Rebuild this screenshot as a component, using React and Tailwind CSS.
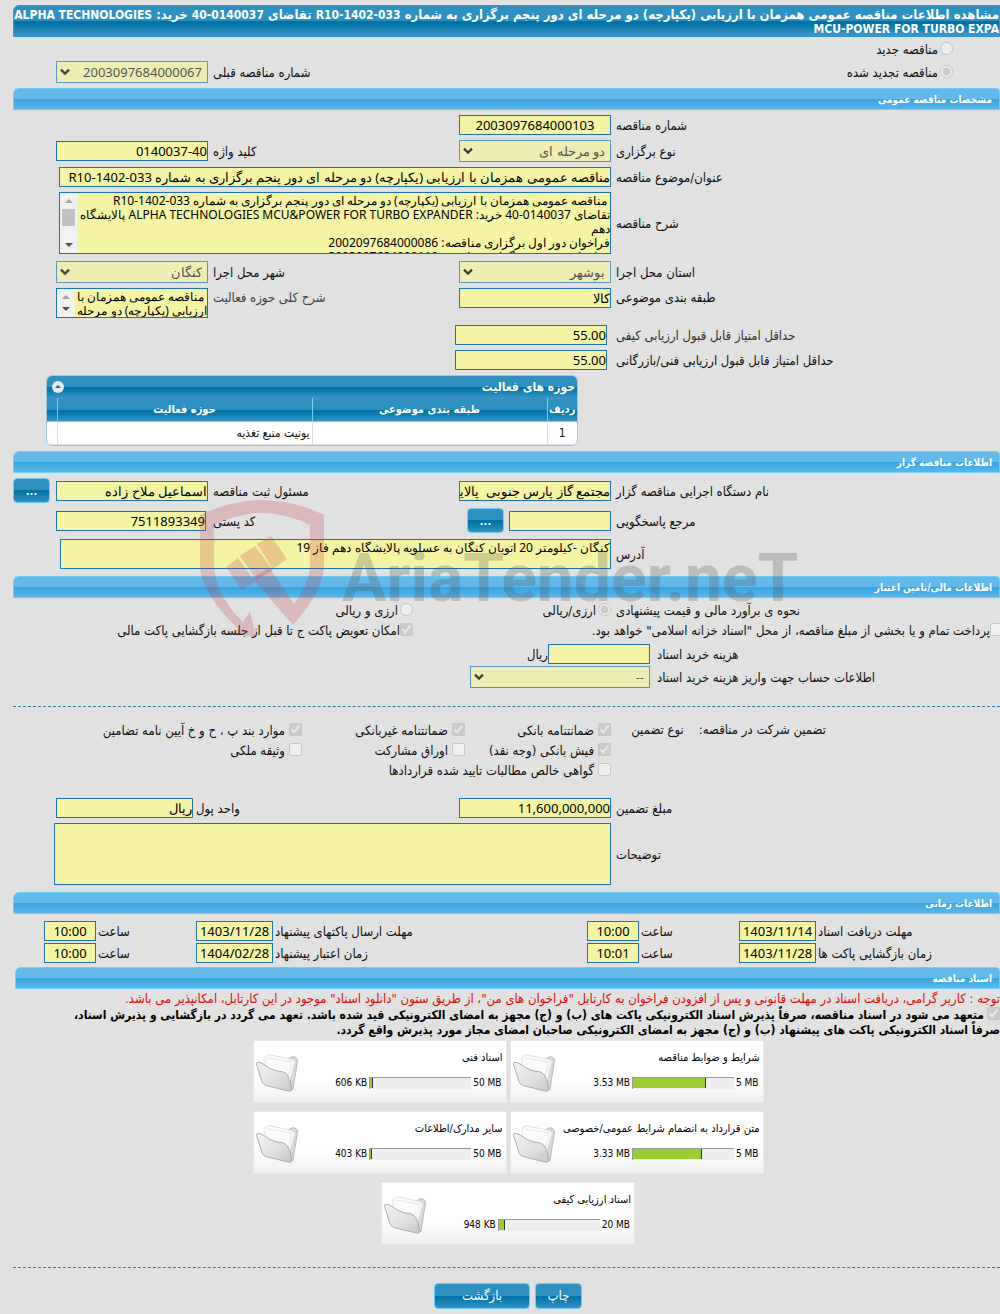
import React, { useId } from "react";

const INPUT =
  "block h-5 border border-[#1d74ab] bg-[#f5f4a4] font-['Noto_Sans',sans-serif] text-[13px] leading-[18px] text-black outline-none";
const AREA =
  "block min-w-0 flex-1 resize-none overflow-hidden whitespace-pre bg-[#f5f4a4] font-['Noto_Sans',sans-serif] text-black outline-none";
const DARK =
  "bg-[linear-gradient(#2d90bf_0,#2d90bf_48%,#0074a8_50%,#0074a8_56%,#3593c1_100%)]";

function Section({ children, edge = "me-[13px]" }) {
  return (
    <h2
      className={`${edge} flex h-[22px] items-center rounded-tl-md rounded-tr-sm border border-[#6dcdf5] bg-[linear-gradient(#63baea_0,#63baea_48%,#36a6e0_50%,#36a6e0_56%,#5db6ea_100%)] ps-[7px] text-[10px] font-bold text-white`}
    >
      {children}
    </h2>
  );
}

function Row({ children, className = "mt-[5px]", align = "items-center" }) {
  return <div className={`grid grid-cols-[384fr_403fr_213fr] ${align} ${className}`}>{children}</div>;
}

function Label({ htmlFor, children, className = "" }) {
  return (
    <label htmlFor={htmlFor} className={`pt-[2px] text-end leading-4 whitespace-nowrap ${className}`}>
      {children}
    </label>
  );
}

function Select({ id, value, width }) {
  return (
    <div className={`relative ${width}`}>
      <select
        id={id}
        disabled
        className="block h-[22px] w-full appearance-none border border-[#5b97bd] bg-[#eeedb3] ps-[5px] pe-6 font-['Noto_Sans',sans-serif] text-[13px] leading-5 text-[#545454] opacity-100"
      >
        <option>{value}</option>
      </select>
      <svg className="pointer-events-none absolute top-[7px] left-1 h-2 w-[10px]" viewBox="0 0 10 8">
        <path d="M1 1.6 5 5.6 9 1.6" fill="none" stroke="#3f3f3f" strokeWidth="2.2" />
      </svg>
    </div>
  );
}

function ScrollBar({ thumb }) {
  return (
    <div className="flex w-[17px] shrink-0 flex-col items-center justify-between bg-[#f1f1f1] py-[6px]">
      <svg className="h-1 w-2" viewBox="0 0 8 4"><path d="M0 4 4 0 8 4Z" fill="#a3a3a3" /></svg>
      {thumb && <div className="mb-3 h-[17px] w-[13px] bg-[#c1c1c1]" />}
      <svg className="h-1 w-2" viewBox="0 0 8 4"><path d="M0 0 4 4 8 0Z" fill="#505050" /></svg>
    </div>
  );
}

function Choice({ type = "checkbox", name, checked, children, gap = "gap-1", className = "" }) {
  const id = useId();
  return (
    <div className={`flex items-center whitespace-nowrap ${gap} ${className}`}>
      <input id={id} type={type} name={name} disabled defaultChecked={checked} className="-mt-[2px] h-[13px] w-[13px] shrink-0" />
      <label htmlFor={id} className="pt-[2px] leading-[18px]">{children}</label>
    </div>
  );
}

function More({ label }) {
  return (
    <button
      type="button"
      aria-label={label}
      className={`block h-[25px] w-[37px] rounded border border-[#6dcdf5] pt-[2px] text-[11px] leading-5 font-bold text-white ${DARK}`}
    >
      ...
    </button>
  );
}

function Dashes({ className }) {
  return <hr className={`me-[13px] border-0 border-t border-dashed border-[#2579a8] ${className}`} />;
}

function Folder() {
  return (
    <svg className="h-10 w-[42px]" viewBox="0 0 42 40">
      <defs>
        <linearGradient id="folderFront" x1="0" y1="0" x2="1" y2="1">
          <stop offset="0" stopColor="#f2f2f2" />
          <stop offset="0.6" stopColor="#dfdfdf" />
          <stop offset="1" stopColor="#c6c6c6" />
        </linearGradient>
      </defs>
      <path d="M30 7 36 4Q41 3 41.500 8L37 36Q36 38 33 37L26 33Z" fill="#d8d8d8" stroke="#b8b8b8" />
      <path d="M9 4 13 1.500 36 6.500 39 9 33 30 9 20Z" fill="#fbfbfb" stroke="#e2e2e2" />
      <path d="M12 5 36 9 31 28" fill="none" stroke="#e8e8e8" />
      <path
        d="M1 9.500Q0 10.500 .8 12L6 29Q7 31.500 10 32.500L32 38Q36 39 35.500 35.500Q34.500 25 30 20.500Q27 18 21 18Q13 16 8 11.500Q6 10 3.500 9.500Z"
        fill="url(#folderFront)"
        stroke="#adadad"
      />
    </svg>
  );
}

function DocCard({ title, used, limit, percent, className = "" }) {
  return (
    <article
      className={`flex h-[63px] w-[254px] justify-between border border-[#e9e9e9] bg-[linear-gradient(#fff_60%,#f0f0f0_100%)] text-black ${className}`}
    >
      <div className="flex flex-col gap-[11px] ps-[3px] pt-[10px]">
        <h3 className="text-[11px] leading-[14px] whitespace-nowrap">{title}</h3>
        <div className="flex items-center gap-[2px] ps-px text-[10px] leading-[14px] whitespace-nowrap">
          <span dir="ltr">{limit}</span>
          <div dir="ltr" className="h-3 w-[102px] border-t border-l border-[#999] bg-[#eee]">
            <div className="h-[10px] border-r border-[#333] bg-[#9acd32]" style={{ width: `${percent}%` }} />
          </div>
          <span dir="ltr">{used}</span>
        </div>
      </div>
      <div className="pe-[2px] pt-[12px]"><Folder /></div>
    </article>
  );
}

function TimeRow({ items, className }) {
  const id = useId();
  return (
    <div className={`grid grid-cols-[182fr_177fr_366fr_177fr_98fr] items-center ${className}`}>
      <Label htmlFor={id + "d0"}>{items[0].label}</Label>
      <div className="flex items-center justify-between ps-[2px]">
        <input id={id + "d0"} readOnly defaultValue={items[0].date} className={`${INPUT} w-[77px] text-center`} />
        <Label htmlFor={id + "t0"}>ساعت</Label>
      </div>
      <div className="flex items-center justify-between ps-[2px]">
        <input id={id + "t0"} readOnly defaultValue={items[0].time} className={`${INPUT} w-[52px] text-center`} />
        <Label htmlFor={id + "d1"}>{items[1].label}</Label>
      </div>
      <div className="flex items-center justify-between ps-[2px]">
        <input id={id + "d1"} readOnly defaultValue={items[1].date} className={`${INPUT} w-[77px] text-center`} />
        <Label htmlFor={id + "t1"}>ساعت</Label>
      </div>
      <div className="ps-[2px]">
        <input id={id + "t1"} readOnly defaultValue={items[1].time} className={`${INPUT} w-[52px] text-center`} />
      </div>
    </div>
  );
}

function Watermark() {
  return (
    <div aria-hidden="true" dir="ltr" className="pointer-events-none absolute top-[497px] left-1/5 flex">
      <svg className="h-[144px] w-[126px]" viewBox="200 497 126 144" fill="#bf3a44" fillOpacity="0.24">
        <path d="M200 515Q262 485 324 515V565Q324 590 293 625L252 578 270 568 294 604Q310 582 310 566V525Q262 501 214 525V566Q216 596 243 622L250 611 256 637 232 634 238 629Q200 592 200 565Z" />
        <path d="M226 567 238 558 255 582 242 590ZM240 556 255 546 273 570 257 580ZM257 544 271 536 287 559 273 569Z" />
      </svg>
      <span className="ms-4 pt-[43px] font-['Roboto'] text-[66px] leading-[78px] font-bold text-[#505050]/25">
        AriaTender.neT
      </span>
    </div>
  );
}

export default function App() {
  return (
    <main
      dir="rtl"
      lang="fa"
      className="relative min-h-screen overflow-hidden bg-[#e1e1e1] pb-[5px] font-['DejaVu_Sans_Condensed','DejaVu_Sans',sans-serif] text-[13px] text-[#111]"
    >
      <h1 className="me-[13px] mt-[5px] h-8 rounded-tl-md border border-[#2f93d6] bg-[linear-gradient(#2d90bf_0,#2d90bf_48%,#0074a8_50%,#0074a8_60%,#4297c3_100%)] pt-[2px] text-[13px] leading-[14px] font-bold whitespace-nowrap text-white">
        مشاهده اطلاعات مناقصه عمومی همزمان با ارزیابی (یکپارچه) دو مرحله ای دور پنجم برگزاری به شماره <span className="text-[12px]">R10-1402-033</span> تقاضای <span className="text-[12px]">0140037-40</span> خرید: <span className="text-[12px]">ALPHA TECHNOLOGIES</span>
        <br />
        <span className="text-[12px]">MCU-POWER FOR TURBO EXPA</span>
      </h1>

      <Choice type="radio" name="kind" gap="gap-[2px]" className="h-6 ps-[47px]">مناقصه جدید</Choice>
      <Row className="">
        <Choice type="radio" name="kind" checked gap="gap-[2px]" className="ps-[47px]">مناقصه تجدید شده</Choice>
        <Label htmlFor="prev">شماره مناقصه قبلی</Label>
        <div className="ps-[5px]"><Select id="prev" value="2003097684000067" width="w-[152px]" /></div>
      </Row>

      <div className="mt-[5px]"><Section>مشخصات مناقصه عمومی</Section></div>

      <Row>
        <Label htmlFor="no">شماره مناقصه</Label>
        <div className="ps-[5px]"><input id="no" readOnly defaultValue="2003097684000103" className={`${INPUT} w-[152px] text-center`} /></div>
      </Row>
      <Row>
        <Label htmlFor="type">نوع برگزاری</Label>
        <div className="flex items-center justify-between ps-[5px]">
          <Select id="type" value="دو مرحله ای" width="w-[152px]" />
          <Label htmlFor="key">کلید واژه</Label>
        </div>
        <div className="ps-[5px]"><input id="key" readOnly defaultValue="0140037-40" className={`${INPUT} w-[152px]`} /></div>
      </Row>
      <Row>
        <Label htmlFor="subject">عنوان/موضوع مناقصه</Label>
        <div className="col-span-2 ps-[5px]">
          <input
            id="subject"
            readOnly
            defaultValue="مناقصه عمومی همزمان با ارزیابی (یکپارچه) دو مرحله ای دور پنجم برگزاری به شماره R10-1402-033"
            className={`${INPUT} w-[552px]`}
          />
        </div>
      </Row>
      <Row>
        <Label htmlFor="desc">شرح مناقصه</Label>
        <div className="col-span-2 ps-[5px]">
          <div className="flex h-[62px] w-[552px] border border-[#1d74ab]">
            <textarea
              id="desc"
              readOnly
              className={`${AREA} pt-px text-[12px] leading-[14px]`}
              defaultValue={
                " مناقصه عمومی همزمان با ارزیابی (یکپارچه) دو مرحله ای دور پنجم برگزاری به شماره R10-1402-033\nتقاضای 0140037-40 خرید: ALPHA TECHNOLOGIES MCU&POWER FOR TURBO EXPANDER پالایشگاه\nدهم\nفراخوان دور اول برگزاری مناقصه: 2002097684000086\nفراخوان دور دوم برگزاری مناقصه: 2003097684000110"
              }
            />
            <ScrollBar thumb />
          </div>
        </div>
      </Row>
      <Row className="mt-[7px]">
        <Label htmlFor="prov">استان محل اجرا</Label>
        <div className="flex items-center justify-between ps-[5px]">
          <Select id="prov" value="بوشهر" width="w-[152px]" />
          <Label htmlFor="city">شهر محل اجرا</Label>
        </div>
        <div className="ps-[5px]"><Select id="city" value="کنگان" width="w-[152px]" /></div>
      </Row>
      <Row align="items-start">
        <Label htmlFor="cat">طبقه بندی موضوعی</Label>
        <div className="flex justify-between ps-[5px]">
          <input id="cat" readOnly defaultValue="کالا" className={`${INPUT} w-[152px]`} />
          <Label htmlFor="field" className="text-[#444]">شرح کلی حوزه فعالیت</Label>
        </div>
        <div className="ps-[5px]">
          <div className="flex h-[30px] w-[152px] border border-[#1d74ab]">
            <textarea
              id="field"
              readOnly
              className={`${AREA} pt-px text-[12px] leading-[14px]`}
              defaultValue={" مناقصه عمومی همزمان با\nارزیابی (یکپارچه) دو مرحله"}
            />
            <ScrollBar />
          </div>
        </div>
      </Row>
      <Row className="mt-[7px]">
        <Label htmlFor="q" className="text-[#333]">حداقل امتیاز قابل قبول ارزیابی کیفی</Label>
        <div className="ps-[9px]"><input id="q" readOnly defaultValue="55.00" className={`${INPUT} w-[152px]`} /></div>
      </Row>
      <Row>
        <Label htmlFor="tech">حداقل امتیاز قابل قبول ارزیابی فنی/بازرگانی</Label>
        <div className="ps-[9px]"><input id="tech" readOnly defaultValue="55.00" className={`${INPUT} w-[152px]`} /></div>
      </Row>

      <div className="ms-auto me-[46px] mt-[5px] w-[532px] overflow-hidden rounded-md border border-[#9cc3df] bg-white">
        <div className={`flex h-[22px] items-center justify-between ps-[2px] pe-[5px] text-[12px] font-bold text-white ${DARK}`}>
          <h3>حوزه های فعالیت</h3>
          <button type="button" aria-label="بستن" className="block h-3 w-3 rounded-full bg-[#e3ebf7]">
            <svg className="h-3 w-3" viewBox="0 0 12 12"><path d="M3 7 6 4 9 7Z" fill="#1a6d9c" /></svg>
          </button>
        </div>
        <table className="w-full table-fixed border-collapse">
          <colgroup>
            <col className="w-[30px]" /><col className="w-[235px]" /><col className="w-[255px]" /><col />
          </colgroup>
          <thead>
            <tr className={`h-[23px] border-t border-b border-t-[#3c93d0] border-b-[#6dcdf5] text-[11px] leading-4 text-white ${DARK}`}>
              <th className="border-e border-[#6dcdf5] p-0">ردیف</th>
              <th className="border-e border-[#6dcdf5] p-0">طبقه بندی موضوعی</th>
              <th className="border-e border-[#6dcdf5] p-0">حوزه فعالیت</th>
              <th className="p-0" />
            </tr>
          </thead>
          <tbody>
            <tr className="h-[23px] border-b border-[#ddd] text-[12px] leading-4">
              <td className="border-e border-[#ddd] p-0 text-center">1</td>
              <td className="border-e border-[#ddd] p-0" />
              <td className="border-e border-[#ddd] p-0 ps-[2px]">یونیت منبع تغذیه</td>
              <td className="p-0" />
            </tr>
          </tbody>
        </table>
      </div>

      <div className="mt-[5px]"><Section>اطلاعات مناقصه گزار</Section></div>

      <Row>
        <Label htmlFor="org">نام دستگاه اجرایی مناقصه گزار</Label>
        <div className="flex items-center justify-between ps-[5px]">
          <input id="org" readOnly defaultValue="مجتمع گاز پارس جنوبی  پالایشگاه دهم" className={`${INPUT} w-[152px]`} />
          <Label htmlFor="owner">مسئول ثبت مناقصه</Label>
        </div>
        <div className="flex items-center justify-between ps-[5px] pe-[13px]">
          <input id="owner" readOnly defaultValue="اسماعیل ملاح زاده" className={`${INPUT} w-[152px]`} />
          <More label="مسئول ثبت مناقصه" />
        </div>
      </Row>
      <Row>
        <Label htmlFor="ref">مرجع پاسخگویی</Label>
        <div className="flex items-center ps-[5px]">
          <input id="ref" readOnly defaultValue="" className={`${INPUT} w-[102px]`} />
          <span className="ms-[5px]"><More label="مرجع پاسخگویی" /></span>
          <Label htmlFor="zip" className="ms-auto">کد پستی</Label>
        </div>
        <div className="ps-[7px]"><input id="zip" readOnly defaultValue="7511893349" className={`${INPUT} w-[150px]`} /></div>
      </Row>
      <Row className="mt-[6px]">
        <Label htmlFor="addr">آدرس</Label>
        <div className="col-span-2 flex ps-[5px]">
          <textarea
            id="addr"
            readOnly
            className="block h-[30px] w-[551px] resize-none overflow-hidden border border-[#1d74ab] bg-[#f5f4a4] font-['Noto_Sans',sans-serif] text-[12px] leading-4 text-black outline-none"
            defaultValue="کنگان -کیلومتر 20 اتوبان کنگان به عسلویه پالایشگاه دهم فاز 19"
          />
        </div>
      </Row>

      <div className="mt-[7px]"><Section>اطلاعات مالی/تامین اعتبار</Section></div>

      <div className="mt-[2px] grid grid-cols-[384fr_203fr_413fr] items-center">
        <span className="pt-[2px] text-end leading-[18px] whitespace-nowrap">نحوه ی برآورد مالی و قیمت پیشنهادی</span>
        <Choice type="radio" name="currency" checked gap="gap-[2px]" className="ps-[5px]">ارزی/ریالی</Choice>
        <Choice type="radio" name="currency" gap="gap-[2px]">ارزی و ریالی</Choice>
      </div>
      <div className="grid grid-cols-[587fr_413fr] items-center">
        <Choice gap="gap-0" className="-ms-[3px]">پرداخت تمام و یا بخشی از مبلغ مناقصه، از محل "اسناد خزانه اسلامی" خواهد بود.</Choice>
        <Choice checked gap="gap-0">امکان تعویض پاکت ج تا قبل از جلسه بازگشایی پاکت مالی</Choice>
      </div>
      <div className="mt-1 grid grid-cols-[343fr_657fr] items-center gap-y-[2px]">
        <Label htmlFor="fee">هزینه خرید اسناد</Label>
        <div className="flex items-center ps-[7px]">
          <input id="fee" readOnly defaultValue="" className={`${INPUT} w-[102px]`} />
          <span className="pt-[2px] leading-4">ریال</span>
        </div>
        <Label htmlFor="acct">اطلاعات حساب جهت واریز هزینه خرید اسناد</Label>
        <div className="ps-[7px]"><Select id="acct" value="--" width="w-[180px]" /></div>
      </div>

      <Dashes className="mt-[18px]" />

      <div className="mt-[13px] grid grid-cols-[389fr_146fr_163fr_302fr] items-center">
        <div className="flex gap-[15px] ps-[174px] leading-5 whitespace-nowrap">
          <span>تضمین شرکت در مناقصه:</span>
          <span>نوع تضمین</span>
        </div>
        <Choice checked>ضمانتنامه بانکی</Choice>
        <Choice checked>ضمانتنامه غیربانکی</Choice>
        <Choice checked>موارد بند پ ، ح و خ آیین نامه تضامین</Choice>
        <Choice checked className="col-start-2">فیش بانکی (وجه نقد)</Choice>
        <Choice>اوراق مشارکت</Choice>
        <Choice>وثیقه ملکی</Choice>
        <Choice className="col-span-3 col-start-2">گواهی خالص مطالبات تایید شده قراردادها</Choice>
      </div>

      <div className="mt-[18px] grid grid-cols-[384fr_420fr_196fr] items-center">
        <Label htmlFor="amount">مبلغ تضمین</Label>
        <div className="flex items-center justify-between ps-[5px]">
          <input id="amount" readOnly defaultValue="11,600,000,000" className={`${INPUT} w-[152px]`} />
          <Label htmlFor="unit">واحد پول</Label>
        </div>
        <div className="ps-[3px]"><input id="unit" readOnly defaultValue="ریال" className={`${INPUT} w-[137px]`} /></div>
      </div>
      <Row>
        <Label htmlFor="notes">توضیحات</Label>
        <div className="col-span-2 flex ps-[5px]">
          <textarea id="notes" readOnly className="block h-[62px] w-[557px] resize-none border border-[#1d74ab] bg-[#f5f4a4] outline-none" />
        </div>
      </Row>

      <div className="mt-[7px]"><Section>اطلاعات زمانی</Section></div>

      <TimeRow
        className="mt-[7px]"
        items={[
          { label: "مهلت دریافت اسناد", date: "1403/11/14", time: "10:00" },
          { label: "مهلت ارسال پاکتهای پیشنهاد", date: "1403/11/28", time: "10:00" },
        ]}
      />
      <TimeRow
        className="mt-[2px]"
        items={[
          { label: "زمان بازگشایی پاکت ها", date: "1403/11/28", time: "10:01" },
          { label: "زمان اعتبار پیشنهاد", date: "1404/02/28", time: "10:00" },
        ]}
      />

      <div className="mt-1"><Section edge="me-[15px]">اسناد مناقصه</Section></div>

      <p className="mt-[2px] text-[13px] leading-4 whitespace-nowrap text-[#dc0b0b]">
        توجه : کاربر گرامی، دریافت اسناد در مهلت قانونی و پس از افزودن فراخوان به کارتابل "فراخوان های من"، از طریق ستون "دانلود اسناد" موجود در این کارتابل، امکانپذیر می باشد.
      </p>
      <div className="text-[12px] leading-[15px] font-bold whitespace-nowrap text-black">
        <input id="pledge" type="checkbox" disabled defaultChecked className="me-[3px] h-[13px] w-[13px] align-[-1px]" />
        <label htmlFor="pledge">
          متعهد می شود در اسناد مناقصه، صرفاً پذیرش اسناد الکترونیکی پاکت های (ب) و (ج) مجهز به امضای الکترونیکی قید شده باشد. تعهد می گردد در بازگشایی و پذیرش اسناد،
          <br />
          صرفاً اسناد الکترونیکی پاکت های پیشنهاد (ب) و (ج) مجهز به امضای الکترونیکی صاحبان امضای مجاز مورد پذیرش واقع گردد.
        </label>
      </div>

      <div className="mt-[2px] flex justify-center pe-4">
        <div className="grid grid-cols-2 gap-x-[3px] gap-y-2">
          <DocCard title="شرایط و ضوابط مناقصه" used="3.53 MB" limit="5 MB" percent={72} />
          <DocCard title="اسناد فنی" used="606 KB" limit="50 MB" percent={3} />
          <DocCard title="متن قرارداد به انضمام شرایط عمومی/خصوصی" used="3.33 MB" limit="5 MB" percent={68} />
          <DocCard title="سایر مدارک/اطلاعات" used="403 KB" limit="50 MB" percent={2} />
          <DocCard title="اسناد ارزیابی کیفی" used="948 KB" limit="20 MB" percent={6} className="col-span-2 justify-self-center" />
        </div>
      </div>

      <Dashes className="mt-[22px]" />

      <div className="mt-[15px] flex justify-center gap-[5px] pe-4 text-[13px] text-white">
        <button type="button" className={`h-[26px] w-[47px] rounded border border-[#6dcdf5] ${DARK}`}>چاپ</button>
        <button type="button" className={`h-[26px] w-[96px] rounded border border-[#6dcdf5] ${DARK}`}>بازگشت</button>
      </div>

      <Watermark />
    </main>
  );
}
